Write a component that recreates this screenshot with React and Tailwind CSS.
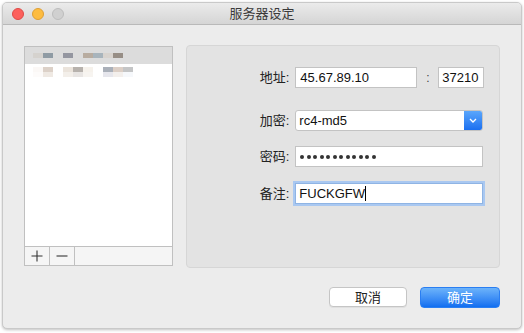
import React from 'react';

const font = { fontFamily: '"Liberation Sans", "Noto Sans CJK SC", sans-serif' };

const Field = ({ label, className = '', children }) => (
    <div className={`flex items-center h-[21px] ${className}`}>
        <div className="w-[108px] pr-[6px] text-right text-[13px] text-[#222]">{label}</div>
        {children}
    </div>
);

const Blurred = ({ cells }) => (
    <div className="flex h-[5px]">
        {cells.map((c, i) => (
            <div key={i} className="w-[10px] h-[5px]" style={{ background: c }} />
        ))}
    </div>
);

const App = () => {
    return (
        <div className="w-[524px] h-[333px] bg-white p-[2px] pb-[4px]" style={font}>
            <div className="w-full h-full rounded-[5px] bg-[#ececec] border border-[#c9c9c9] shadow-[0_1px_3px_rgba(0,0,0,0.25)] overflow-hidden flex flex-col">
                {/* title bar */}
                <div className="h-[22px] shrink-0 relative flex items-center justify-center bg-gradient-to-b from-[#ebebeb] to-[#d5d5d5] border-b border-[#b9b9b9]">
                    <div className="absolute left-[9px] top-[5px] flex gap-[8px]">
                        <div className="w-[12px] h-[12px] rounded-full bg-[#fc605c] border border-[#de4a46]" />
                        <div className="w-[12px] h-[12px] rounded-full bg-[#fdbc40] border border-[#de9f34]" />
                        <div className="w-[12px] h-[12px] rounded-full bg-[#d0d0d0] border border-[#bdbdbd]" />
                    </div>
                    <span className="text-[13px] text-[#3a3a3a]">服务器设定</span>
                </div>

                {/* body */}
                <div className="flex-1 flex gap-[13px] px-[21px] pt-[21px]">
                    {/* server list */}
                    <div className="w-[150px] h-[220px] bg-white border border-[#c0c0c0] flex flex-col">
                        <div className="h-[17px] bg-[#dcdcdc] flex flex-col justify-center pl-[8px]">
                            <Blurred cells={['#d5d2ce', '#8f9ba4', '#dcdcdc', '#9496a0', '#dcdcdc', '#b8aca0', '#a8b4bc', '#d8d3ce', '#978e86']} />
                        </div>
                        <div className="pt-[3px] pl-[8px]">
                            <Blurred cells={['#fbf8f6', '#dcd1c8', '#ffffff', '#ebe4dc', '#b7b2ad', '#f6f2ec', '#ffffff', '#aab0b9', '#dccfc6', '#c4c5c6']} />
                            <Blurred cells={['#fdfbfa', '#efe9e3', '#ffffff', '#f3efea', '#e8e5e3', '#f7f4f0', '#ffffff', '#e6e6ec', '#f3efec', '#f6f8fb']} />
                        </div>
                        <div className="flex-1" />
                        <div className="h-[19px] border-t border-[#c0c0c0] bg-[#f5f5f5] flex text-[#333]">
                            <div className="w-[25px] border-r border-[#c0c0c0] flex items-center justify-center">
                                <svg width="12" height="12" viewBox="0 0 12 12"><path d="M6 0.5v11M0.5 6h11" stroke="#333" strokeWidth="1.1" /></svg>
                            </div>
                            <div className="w-[25px] border-r border-[#c0c0c0] flex items-center justify-center">
                                <svg width="12" height="12" viewBox="0 0 12 12"><path d="M0.5 6h11" stroke="#333" strokeWidth="1.1" /></svg>
                            </div>
                        </div>
                    </div>

                    {/* settings panel */}
                    <div className="w-[315px] h-[223px] -mt-[1px] rounded-[4px] bg-[#e3e3e3] border border-[#d6d6d6] flex flex-col pt-[21px]">
                        <Field label="地址:">
                            <input readOnly value="45.67.89.10" className="w-[122px] h-[21px] bg-white border border-[#c3c3c3] px-[4px] text-[13px] text-[#111] outline-none" style={font} />
                            <span className="w-[21px] text-center text-[12px] text-[#444]">:</span>
                            <input readOnly value="37210" className="w-[46px] h-[21px] bg-white border border-[#c3c3c3] px-[3px] text-[13px] text-[#111] outline-none" style={font} />
                        </Field>
                        <Field label="加密:" className="mt-[22px]">
                            <div className="w-[188px] h-[21px] flex rounded-[3px] border border-[#c3c3c3] bg-white overflow-hidden">
                                <div className="flex-1 px-[3px] text-[13px] text-[#111] leading-[19px]">rc4-md5</div>
                                <div className="w-[18px] bg-gradient-to-b from-[#5aa6fb] to-[#1a6ff0] flex items-center justify-center">
                                    <svg width="8" height="5" viewBox="0 0 8 5"><path d="M1 1l3 3 3-3" stroke="white" strokeWidth="1.3" fill="none" /></svg>
                                </div>
                            </div>
                        </Field>
                        <Field label="密码:" className="mt-[15px]">
                            <div className="w-[188px] h-[21px] bg-white border border-[#c3c3c3] px-[4px] flex items-center gap-[2.5px]">
                                {Array.from({ length: 12 }).map((_, i) => (
                                    <span key={i} className="w-[4px] h-[4px] rounded-full bg-[#333]" />
                                ))}
                            </div>
                        </Field>
                        <Field label="备注:" className="mt-[16px]">
                            <div className="w-[188px] h-[21px] bg-white border border-[#8fb4e4] shadow-[0_0_0_2px_#a9c8f1] px-[3px] flex items-center text-[13px] text-[#111]">
                                FUCKGFW<span className="w-[1px] h-[15px] bg-black" />
                            </div>
                        </Field>
                    </div>
                </div>

                {/* buttons */}
                <div className="h-[44px] shrink-0 flex justify-end items-start gap-[13px] pr-[21px] pt-[3px]">
                    <button className="w-[78px] h-[20px] rounded-[4px] bg-white border border-[#c5c5c5] shadow-[0_1px_0_rgba(0,0,0,0.05)] text-[13px] text-[#222] leading-none" style={font}>取消</button>
                    <button className="w-[80px] h-[21px] rounded-[4px] bg-gradient-to-b from-[#6cb3fa] to-[#0f6ef0] border border-[#2a7ef2] text-[13px] text-white leading-none" style={font}>确定</button>
                </div>
            </div>
        </div>
    );
};

export default App;
